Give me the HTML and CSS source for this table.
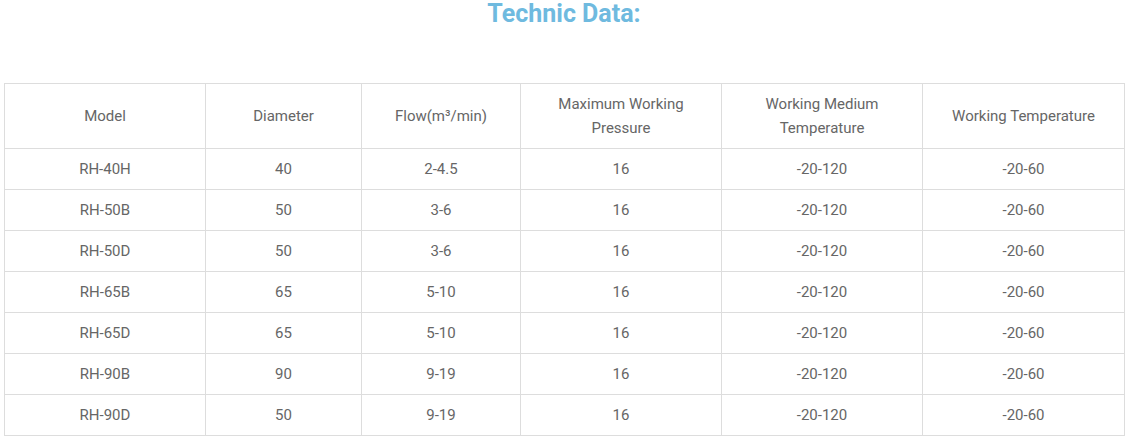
FILE: index.html
```html
<!DOCTYPE html>
<html>
<head>
<meta charset="utf-8">
<link rel="stylesheet" href="styles.css">
</head>
<body>
<div class="page">
  <h2 class="title">Technic Data:</h2>
  <table class="data">
    <colgroup>
      <col class="c1"><col class="c2"><col class="c3"><col class="c4"><col class="c5"><col class="c6">
    </colgroup>
    <thead>
      <tr>
        <th>Model</th>
        <th>Diameter</th>
        <th>Flow(m³/min)</th>
        <th>Maximum Working<br>Pressure</th>
        <th>Working Medium<br>Temperature</th>
        <th>Working Temperature</th>
      </tr>
    </thead>
    <tbody>
      <tr><td>RH-40H</td><td>40</td><td>2-4.5</td><td>16</td><td>-20-120</td><td>-20-60</td></tr>
      <tr><td>RH-50B</td><td>50</td><td>3-6</td><td>16</td><td>-20-120</td><td>-20-60</td></tr>
      <tr><td>RH-50D</td><td>50</td><td>3-6</td><td>16</td><td>-20-120</td><td>-20-60</td></tr>
      <tr><td>RH-65B</td><td>65</td><td>5-10</td><td>16</td><td>-20-120</td><td>-20-60</td></tr>
      <tr><td>RH-65D</td><td>65</td><td>5-10</td><td>16</td><td>-20-120</td><td>-20-60</td></tr>
      <tr><td>RH-90B</td><td>90</td><td>9-19</td><td>16</td><td>-20-120</td><td>-20-60</td></tr>
      <tr><td>RH-90D</td><td>50</td><td>9-19</td><td>16</td><td>-20-120</td><td>-20-60</td></tr>
    </tbody>
  </table>
</div>
</body>
</html>
```
FILE: styles.css
```css
html, body {
  margin: 0;
  padding: 0;
  background: #ffffff;
}
.page {
  padding: 0 5px 0 4px;
  font-family: Roboto, "Liberation Sans", sans-serif;
  color: #666666;
}
.title {
  margin: 0 0 55px 0;
  height: 28px;
  line-height: 28px;
  text-align: center;
  font-size: 25px;
  font-weight: 700;
  color: #6fbadf;
}
.data {
  width: 1120px;
  border-collapse: collapse;
  table-layout: fixed;
  font-size: 15px;
}
.c1 { width: 201px; }
.c2 { width: 156px; }
.c3 { width: 159px; }
.c4 { width: 201px; }
.c5 { width: 201px; }
.c6 { width: 202px; }
.data th, .data td {
  border: 1px solid #dddddd;
  text-align: center;
  vertical-align: middle;
  padding: 0 8px;
  font-weight: 400;
  color: #666666;
}
.data th {
  height: 64px;
  line-height: 24px;
  padding-top: 0;
  padding-bottom: 0;
}
.data td {
  height: 40px;
  line-height: 20px;
}
```
